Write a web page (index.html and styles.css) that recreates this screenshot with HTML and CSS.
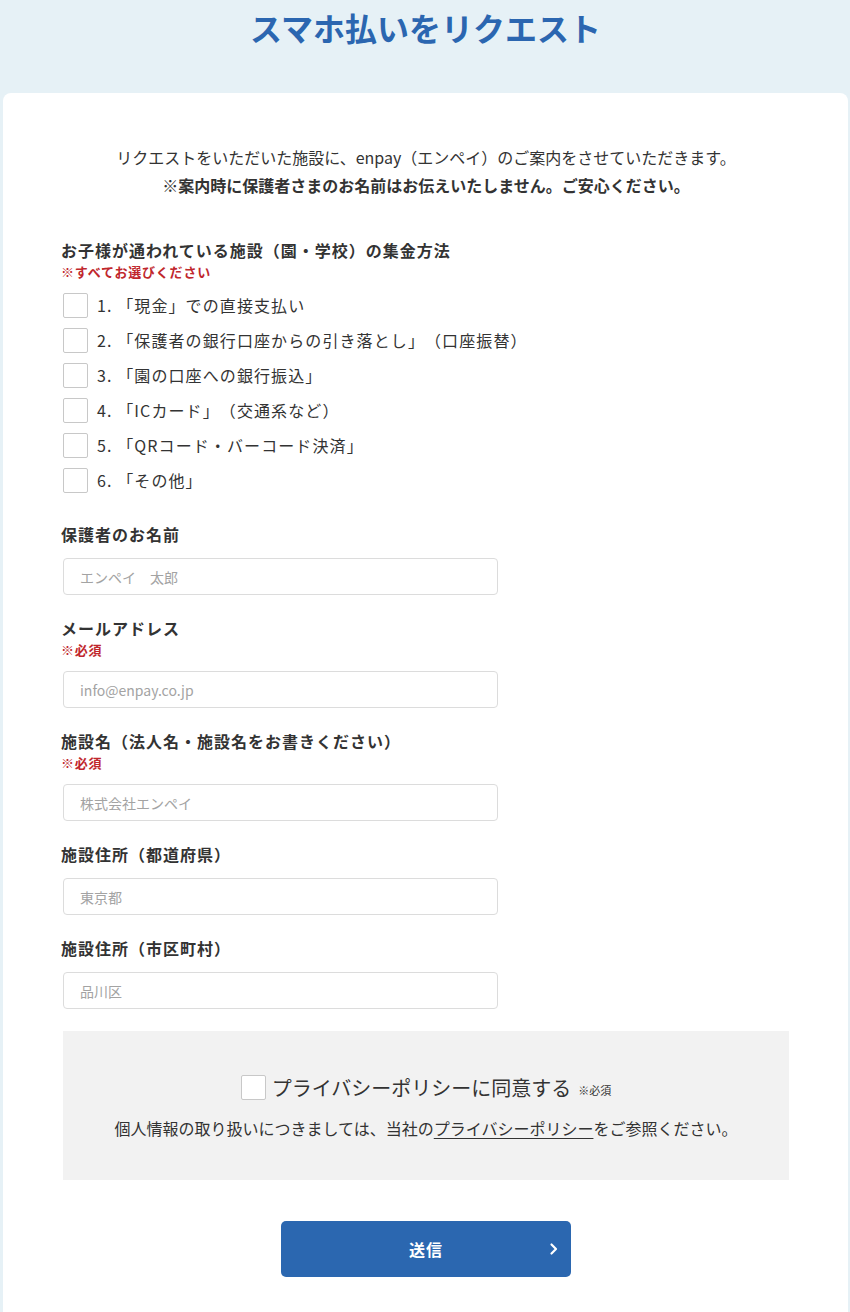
FILE: index.html
```html
<!DOCTYPE html>
<html lang="ja">
<head>
<meta charset="utf-8">
<title>スマホ払いをリクエスト</title>
<link rel="stylesheet" href="styles.css">
</head>
<body>
<header class="page-header">
  <h1 class="page-title">スマホ払いをリクエスト</h1>
</header>
<main class="card">
  <div class="intro">
    <p>リクエストをいただいた施設に、enpay（エンペイ）のご案内をさせていただきます。</p>
    <p class="intro-strong">※案内時に保護者さまのお名前はお伝えいたしません。ご安心ください。</p>
  </div>

  <section class="field field-first">
    <div class="label">お子様が通われている施設（園・学校）の集金方法</div>
    <div class="note">※すべてお選びください</div>
    <ul class="options">
      <li class="option"><span class="box"></span><span>1. 「現金」での直接支払い</span></li>
      <li class="option"><span class="box"></span><span>2. 「保護者の銀行口座からの引き落とし」（口座振替）</span></li>
      <li class="option"><span class="box"></span><span>3. 「園の口座への銀行振込」</span></li>
      <li class="option"><span class="box"></span><span>4. 「ICカード」（交通系など）</span></li>
      <li class="option"><span class="box"></span><span>5. 「QRコード・バーコード決済」</span></li>
      <li class="option"><span class="box"></span><span>6. 「その他」</span></li>
    </ul>
  </section>

  <section class="field field-gap">
    <div class="label">保護者のお名前</div>
    <div class="input">エンペイ　太郎</div>
  </section>

  <section class="field">
    <div class="label">メールアドレス</div>
    <div class="note">※必須</div>
    <div class="input">info@enpay.co.jp</div>
  </section>

  <section class="field">
    <div class="label">施設名（法人名・施設名をお書きください）</div>
    <div class="note">※必須</div>
    <div class="input">株式会社エンペイ</div>
  </section>

  <section class="field">
    <div class="label">施設住所（都道府県）</div>
    <div class="input">東京都</div>
  </section>

  <section class="field">
    <div class="label">施設住所（市区町村）</div>
    <div class="input">品川区</div>
  </section>

  <div class="privacy">
    <div class="agree"><span class="box"></span><span class="agree-text">プライバシーポリシーに同意する</span><span class="agree-note">※必須</span></div>
    <p class="privacy-text">個人情報の取り扱いにつきましては、当社の<a class="privacy-link">プライバシーポリシー</a>をご参照ください。</p>
  </div>

  <div class="actions">
    <button class="submit" type="button">送信<svg class="chev" width="10" height="14" viewBox="0 0 10 14"><polyline points="2.5,2.5 7,7 2.5,11.5" fill="none" stroke="#fff" stroke-width="2.2" stroke-linecap="round" stroke-linejoin="round"/></svg></button>
  </div>
</main>
</body>
</html>
```

FILE: styles.css
```css
html, body {
  margin: 0;
  padding: 0;
}
body {
  background: #e6f1f6;
  font-family: "Noto Sans CJK JP", "Noto Sans", sans-serif;
  color: #333;
  padding: 0 2px 0 3px;
}
.page-header {
  height: 93px;
  text-align: center;
}
.page-title {
  margin: 0;
  padding-top: 5px;
  font-size: 32px;
  line-height: 44px;
  font-weight: 700;
  letter-spacing: 0;
  color: #2b66b0;
}
.card {
  background: #fff;
  border-radius: 8px 8px 0 0;
  padding: 50px 59px 60px 58px;
  min-height: 1100px;
}
.intro {
  text-align: center;
  font-size: 16px;
  line-height: 28px;
  padding-left: 2px;
}
.intro p {
  margin: 0;
}
.intro-strong {
  font-weight: 700;
}
.field {
  margin-top: 22px;
}
.field-first {
  margin-top: 39px;
}
.field-gap {
  margin-top: 31px;
}
.label {
  font-size: 16px;
  line-height: 24px;
  font-weight: 700;
  letter-spacing: 1px;
  color: #333;
}
.note {
  margin-top: 1px;
  font-size: 13px;
  line-height: 18px;
  font-weight: 700;
  letter-spacing: 0.8px;
  color: #c0272d;
}
.options {
  list-style: none;
  margin: 12px 0 0;
  padding: 0;
  display: flex;
  flex-direction: column;
  gap: 11px;
}
.option {
  display: flex;
  align-items: center;
  gap: 9px;
  padding-left: 2px;
  height: 24px;
  font-size: 16px;
  letter-spacing: 1.1px;
  text-spacing-trim: space-all;
  color: #333;
}
.box {
  display: inline-block;
  width: 23px;
  height: 23px;
  border: 1px solid #c8c8c8;
  border-radius: 2px;
  background: #fff;
  flex: none;
}
.input {
  margin-top: 12px;
  margin-left: 2px;
  width: 435px;
  height: 37px;
  box-sizing: border-box;
  border: 1px solid #dcdcdc;
  border-radius: 4px;
  padding: 0 16px;
  display: flex;
  align-items: center;
  font-size: 14px;
  color: #a3a3a3;
}
.field + .field .label {
  margin-top: -1px;
}
.privacy {
  margin: 22px 0 0 2px;
  width: 726px;
  height: 149px;
  box-sizing: border-box;
  background: #f2f2f2;
  padding-top: 42px;
  text-align: center;
}
.agree {
  display: flex;
  justify-content: center;
  align-items: center;
  height: 28px;
  gap: 6px;
}
.agree-text {
  font-size: 20px;
  color: #333;
}
.agree-note {
  font-size: 11px;
  color: #333;
  margin-left: 1px;
  padding-top: 5px;
}
.privacy-text {
  margin: 15px 0 0;
  font-size: 16px;
  line-height: 24px;
  color: #333;
}
.privacy-link {
  color: #333;
  text-decoration: underline;
  text-underline-offset: 3px;
}
.actions {
  display: flex;
  justify-content: center;
  margin-top: 41px;
  padding-left: 2px;
}
.submit {
  position: relative;
  width: 290px;
  height: 56px;
  border: none;
  border-radius: 5px;
  background: #2b67b0;
  color: #fff;
  font-family: "Noto Sans CJK JP", "Noto Sans", sans-serif;
  font-size: 16px;
  font-weight: 700;
  letter-spacing: 1px;
}
.chev {
  position: absolute;
  right: 12px;
  top: 21px;
}
```
